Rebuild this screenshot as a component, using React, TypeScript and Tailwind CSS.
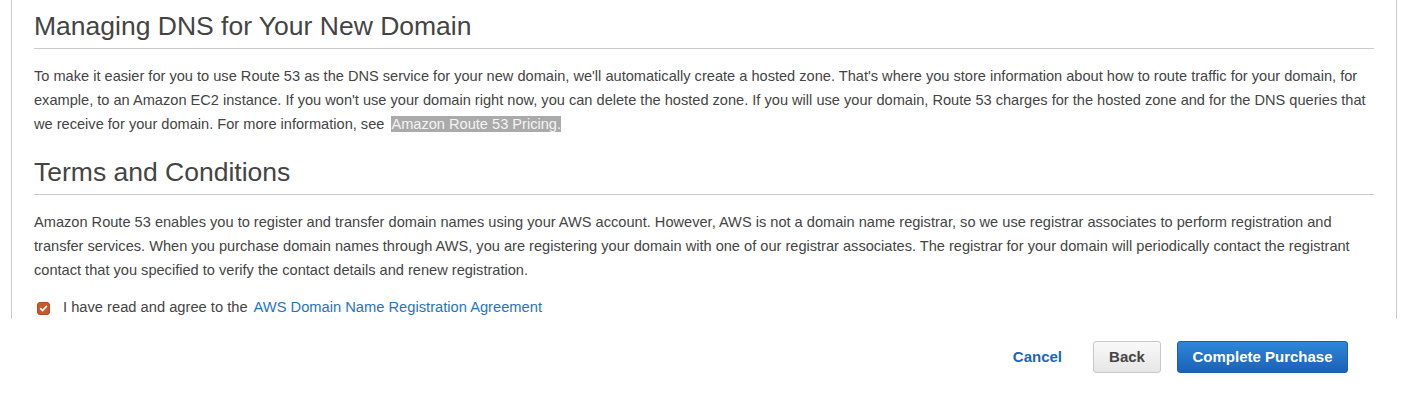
const CheckIcon = () => (
  <span className="inline-flex h-[13px] w-[13px] items-center justify-center rounded-[3px] bg-[#c9582b] border border-[#b04a20]">
    <svg width="9" height="9" viewBox="0 0 10 10" fill="none">
      <path d="M1.8 5.2 L4 7.3 L8.3 2.6" stroke="#fff" strokeWidth="1.8" strokeLinecap="round" strokeLinejoin="round" />
    </svg>
  </span>
);

const Section = ({ title, children }: { title: string; children: React.ReactNode }) => (
  <div>
    <h2 className="text-[26.5px] leading-[30px] text-[#444] border-b border-[#cccccc] pb-[7px]">{title}</h2>
    <p className="mt-[15px] text-[14.6px] leading-[24px] text-[#444]">{children}</p>
  </div>
);

export default function App() {
  return (
    <div className="w-[1410px] h-[400px] bg-white" style={{ fontFamily: '"Liberation Sans", Arial, sans-serif' }}>
      <div className="ml-[11px] mr-[13px] border-x border-[#cccccc] px-[22px] pt-[11px]">
        <Section title="Managing DNS for Your New Domain">
          To make it easier for you to use Route 53 as the DNS service for your new domain, we'll automatically create a
          hosted zone. That's where you store information about how to route traffic for your domain, for example, to an
          Amazon EC2 instance. If you won't use your domain right now, you can delete the hosted zone. If you will use your
          domain, Route 53 charges for the hosted zone and for the DNS queries that we receive for your domain. For more
          information, see <span className="ml-[3px] bg-[#aaaaaa] text-[#f4f4f4]">Amazon Route 53 Pricing.</span>
        </Section>
        <div className="mt-[21px]">
          <Section title="Terms and Conditions">
            Amazon Route 53 enables you to register and transfer domain names using your AWS account. However, AWS is not a
            domain name registrar, so we use registrar associates to perform registration and transfer services. When you
            purchase domain names through AWS, you are registering your domain with one of our registrar associates. The
            registrar for your domain will periodically contact the registrant contact that you specified to verify the
            contact details and renew registration.
          </Section>
        </div>
        <div className="mt-[13px] flex h-[24px] items-center pl-[3px] text-[14.7px] text-[#444]">
          <span className="mt-[2px]">
            <CheckIcon />
          </span>
          <span className="ml-[13px]">I have read and agree to the</span>
          <a className="ml-[6px] text-[#1f74c4]">AWS Domain Name Registration Agreement</a>
        </div>
      </div>
      <div className="mt-[22px] flex items-center justify-end pr-[62px]">
        <button className="mr-[31px] text-[15px] font-bold text-[#1a66bd]">Cancel</button>
        <button className="h-[32px] w-[68px] rounded-[3px] border border-[#c8c8c8] bg-gradient-to-b from-[#f9f9f9] to-[#e6e6e6] text-[15px] font-bold text-[#444]">
          Back
        </button>
        <button className="ml-[16px] h-[32px] w-[171px] rounded-[3px] border border-[#1a5fa8] bg-gradient-to-b from-[#2e86d8] to-[#1a62b7] text-[15px] font-bold text-white">
          Complete Purchase
        </button>
      </div>
    </div>
  );
}
